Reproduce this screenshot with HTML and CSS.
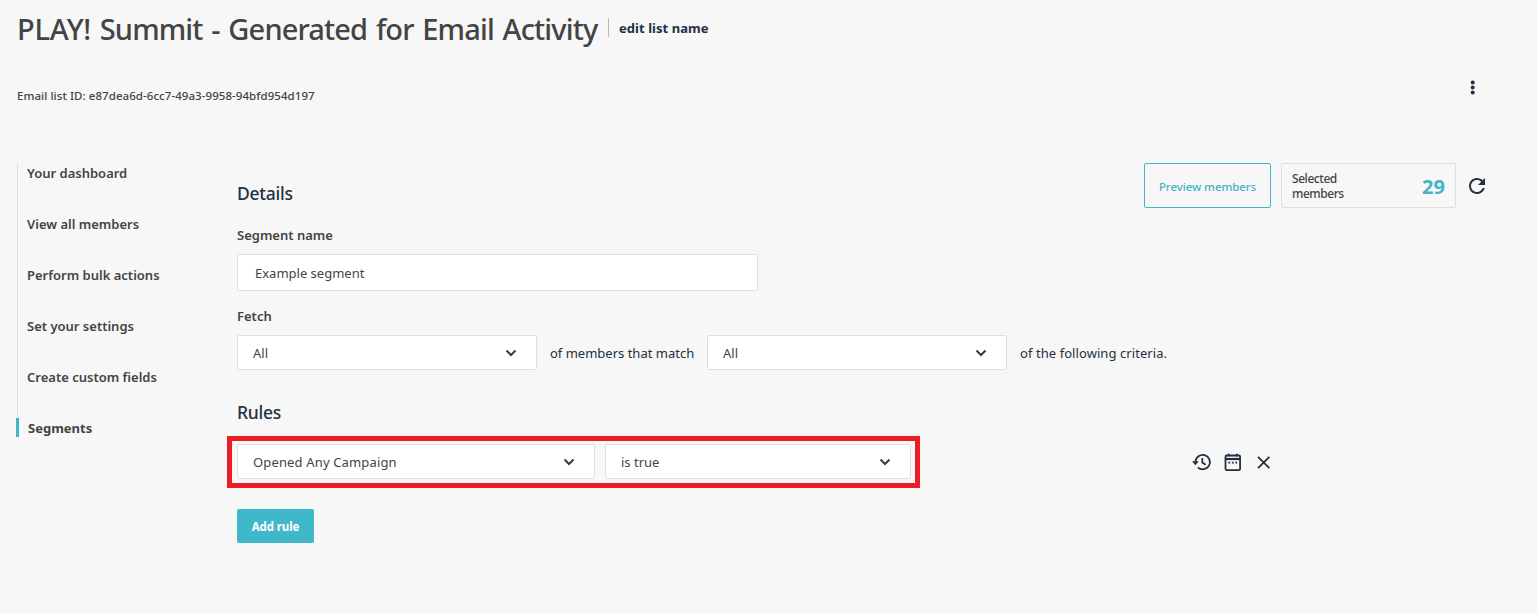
FILE: index.html
```html
<!DOCTYPE html>
<html lang="en">
<head>
<meta charset="utf-8">
<title>Segments</title>
<link rel="stylesheet" href="styles.css">
</head>
<body>
<header class="page-header">
  <h1 class="title"><span class="brand">PLAY!</span> Summit - Generated for Email Activity</h1>
  <a class="edit-link">edit list name</a>
</header>
<div class="meta">
  <p class="list-id">Email list ID: e87dea6d-6cc7-49a3-9958-94bfd954d197</p>
  <svg class="more" width="6" height="16" viewBox="0 0 6 16" fill="#22303f"><circle cx="2.7" cy="2.4" r="2"/><circle cx="2.7" cy="7.5" r="2"/><circle cx="2.7" cy="12.6" r="2"/></svg>
</div>
<div class="layout">
  <nav class="side-nav">
    <a class="nav-item">Your dashboard</a>
    <a class="nav-item">View all members</a>
    <a class="nav-item">Perform bulk actions</a>
    <a class="nav-item">Set your settings</a>
    <a class="nav-item">Create custom fields</a>
    <a class="nav-item active">Segments</a>
  </nav>
  <main class="content">
    <div class="top-row">
      <h2 class="heading">Details</h2>
      <div class="summary">
        <button class="preview">Preview members</button>
        <div class="selected"><span>Selected<br>members</span><span class="count">29</span></div>
        <svg class="refresh" width="16" height="16" viewBox="4 4 16 16" fill="#22303f"><path d="M17.65 6.35C16.2 4.9 14.21 4 12 4c-4.42 0-7.99 3.58-7.99 8s3.57 8 7.99 8c3.73 0 6.84-2.55 7.73-6h-2.08c-.82 2.33-3.04 4-5.65 4-3.31 0-6-2.69-6-6s2.69-6 6-6c1.66 0 3.14.69 4.22 1.78L13 11h7V4l-2.35 2.35z"/></svg>
      </div>
    </div>
    <label class="label">Segment name</label>
    <div class="field name-field">Example segment</div>
    <label class="label label-fetch">Fetch</label>
    <div class="fetch-row">
      <div class="field select fetch-select"><span>All</span><svg class="chev" width="12" height="8" viewBox="0 0 12 8"><path d="M1.5 1.5 6 6l4.5-4.5"/></svg></div>
      <span class="copy copy-match">of members that match</span>
      <div class="field select fetch-select"><span>All</span><svg class="chev" width="12" height="8" viewBox="0 0 12 8"><path d="M1.5 1.5 6 6l4.5-4.5"/></svg></div>
      <span class="copy copy-criteria">of the following criteria.</span>
    </div>
    <h2 class="heading rules-heading">Rules</h2>
    <div class="rule-row">
      <div class="highlight">
        <div class="field select rule-type"><span>Opened Any Campaign</span><svg class="chev" width="12" height="8" viewBox="0 0 12 8"><path d="M1.5 1.5 6 6l4.5-4.5"/></svg></div>
        <div class="field select rule-value"><span>is true</span><svg class="chev" width="12" height="8" viewBox="0 0 12 8"><path d="M1.5 1.5 6 6l4.5-4.5"/></svg></div>
      </div>
      <div class="rule-actions">
        <svg width="20" height="20" viewBox="0 0 20 20"><path d="M3.5 9.8A7.2 7.2 0 1 1 5.8 15.4"/><path d="M10.3 6v4.6l3.4 2.2"/><path class="solid" d="M0 9.3h6.8L3.4 13.2z"/></svg>
        <svg width="20" height="20" viewBox="0 0 20 20"><rect x="2.5" y="3.5" width="14.6" height="14.6" rx="1.3"/><path d="M2.5 7h14.6" stroke-width="2.2"/><path d="M5.6 1.8v2.5M14 1.8v2.5" stroke-width="2"/><path d="M5.4 10.7h1.8M8.9 10.7h1.8M12.4 10.7h1.8" stroke-width="1.8"/></svg>
        <svg width="20" height="20" viewBox="0 0 20 20"><path d="M4 4.8l11.4 11.4M15.4 4.8L4 16.2"/></svg>
      </div>
    </div>
    <button class="add-rule">Add rule</button>
  </main>
</div>
</body>
</html>
```
FILE: styles.css
```css
* { box-sizing: border-box; }
body {
  margin: 0;
  height: 613px;
  overflow: hidden;
  background: #f7f7f7;
  color: #444;
  font: 13px/18px "Noto Sans", "Open Sans", sans-serif;
  white-space: nowrap;
}
h1, h2, p { margin: 0; }
button { font: inherit; padding: 0; }
svg { display: block; flex: none; }
.page-header { display: flex; height: 60px; padding-left: 17px; }
.title { width: 591px; padding-top: 9px; font-size: 29px; line-height: 40px; font-weight: 500; letter-spacing: -.86px; word-spacing: 2px; }
.brand { letter-spacing: -.25px; }
.edit-link { height: 19px; margin-top: 18px; padding-left: 10px; border-left: 1px solid #b9b9b9; color: #22303f; font-weight: 700; line-height: 20px; letter-spacing: .05px; }
.meta { display: flex; justify-content: space-between; height: 103px; padding: 19px 61px 0 17px; }
.list-id { padding-top: 8px; font-size: 11.5px; font-weight: 500; letter-spacing: .06px; }
.more { margin-top: 1px; }
.layout { display: flex; padding-left: 16px; }
.side-nav { display: flex; flex-direction: column; gap: 32px; width: 221px; height: 274px; background: linear-gradient(#dedede, #dedede) 1px 0 / 1px 100% no-repeat; }
.nav-item { height: 19px; padding-left: 11px; line-height: 20px; font-weight: 600; }
.active { border-left: 3px solid #43b5c5; padding-left: 9px; font-weight: 700; }
.content { width: 1250px; }
.top-row { display: flex; justify-content: space-between; height: 62px; }
.heading { color: #22303f; font-size: 17.5px; line-height: 24px; font-weight: 500; letter-spacing: -.25px; }
.top-row .heading { padding-top: 18px; }
.summary { display: flex; height: 45px; align-items: center; }
.preview { width: 127px; height: 45px; margin-right: 10px; padding-top: 2px; border: 1px solid #43b5c5; border-radius: 2px; background: none; color: #43b5c5; font-size: 11.5px; font-weight: 500; letter-spacing: -.08px; }
.selected { display: flex; justify-content: space-between; align-items: center; width: 175px; height: 45px; margin-right: 13px; padding: 1px 10px 0; border: 1px solid #dfdfdf; border-radius: 2px; font-size: 12px; line-height: 15px; font-weight: 500; letter-spacing: -.45px; }
.count { padding-top: 1px; color: #43b5c5; font-size: 20px; font-weight: 700; letter-spacing: 0; }
.refresh { margin-right: 2px; }
.label { display: block; height: 29px; line-height: 20px; font-weight: 600; }
.field { display: flex; align-items: center; background: #fff; border: 1px solid #dfdfdf; border-radius: 2px; }
.name-field { width: 521px; height: 37px; padding-left: 17px; }
.label-fetch { margin-top: 15px; }
.fetch-row { display: flex; align-items: center; height: 35px; }
.select { justify-content: space-between; height: 35px; padding: 0 19px 0 15px; }
.chev { fill: none; stroke: #3c3c3c; stroke-width: 2; }
.fetch-select { width: 300px; }
.copy { padding-left: 13px; color: #22303f; }
.copy-match { width: 170px; }
.copy-criteria { letter-spacing: .07px; }
.rules-heading { margin-top: 30px; }
.rule-row { display: flex; justify-content: space-between; align-items: center; height: 52px; margin: 12px 213px 0 -10px; }
.highlight { display: flex; gap: 10px; width: 693px; height: 52px; padding: 3px 4px 3px 5px; border: 5px solid #eb1c24; }
.rule-type { width: 358px; letter-spacing: .15px; }
.rule-value { width: 306px; }
.rule-actions { display: flex; align-items: center; gap: 11px; fill: none; stroke: #22303f; stroke-width: 1.8; }
.solid { fill: #22303f; stroke: none; }
.add-rule { display: block; width: 77px; height: 34px; margin-top: 21px; padding-top: 1px; border: 0; border-radius: 2px; background: #3fb8ca; color: #fff; font-size: 11.5px; font-weight: 700; letter-spacing: -.1px; }
```
